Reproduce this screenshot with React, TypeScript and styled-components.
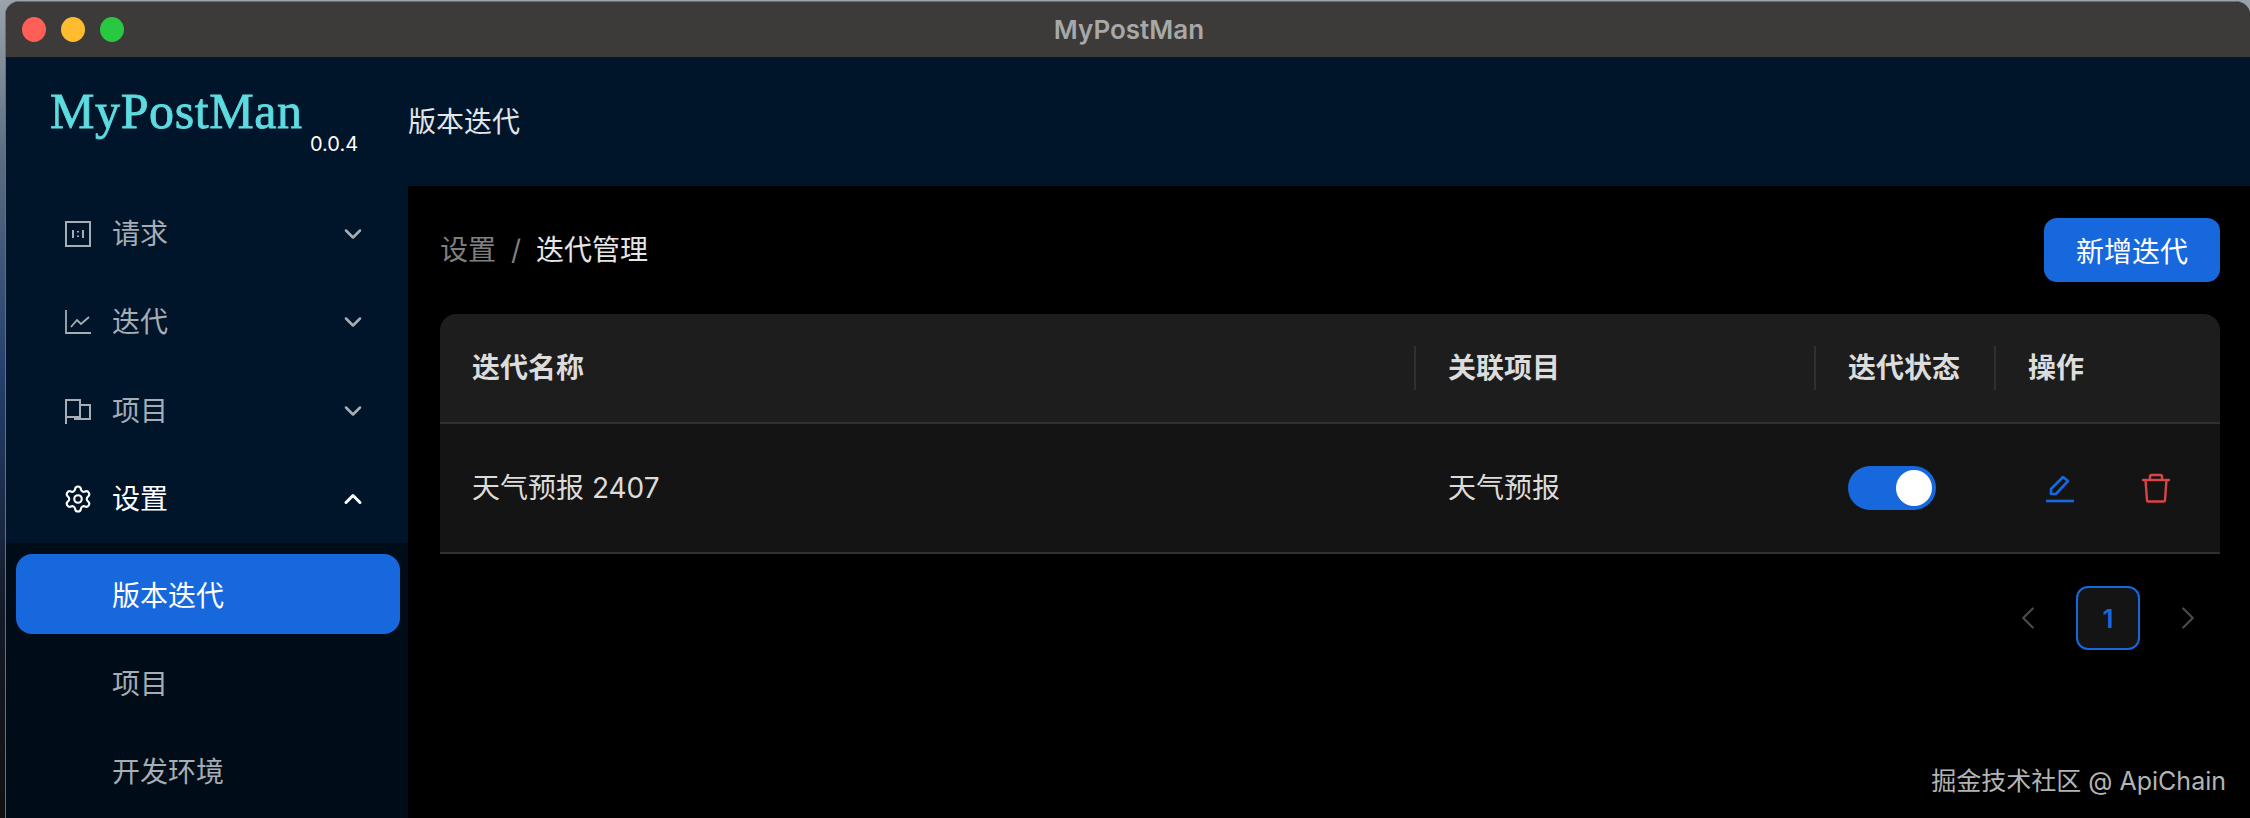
import React from 'react';
import styled, { createGlobalStyle } from 'styled-components';
import { ChevronDown, ChevronLeft, ChevronRight, ChevronUp, Settings } from 'lucide-react';

const CJK = `"Inter", "Noto Sans CJK SC", sans-serif`;

const GlobalStyle = createGlobalStyle`
  html, body {
    margin: 0;
    background: #000;
    overflow: hidden;
  }
  * { box-sizing: border-box; }
`;

const Desktop = styled.div`
  width: 2250px;
  height: 818px;
  padding: 1px 0 0 5px;
  background: linear-gradient(180deg, #9aa3ab 0%, #5a6b80 20%, #24406e 45%, #141a28 75%, #111 100%);
  font-family: ${CJK};
`;

const Window = styled.div`
  height: 817px;
  display: flex;
  flex-direction: column;
  border-style: solid;
  border-color: #6e6e6e;
  border-width: 1px 0 0 1px;
  border-radius: 14px 14px 0 0;
  overflow: hidden;
  background: #000;
`;

const TitleBar = styled.div`
  height: 56px;
  flex: none;
  display: flex;
  align-items: center;
  position: relative;
  padding-left: 16px;
  gap: 15px;
  background: #3c3b39;
  border-bottom: 1px solid #161616;
`;

const Light = styled.span<{ $color: string }>`
  width: 24px;
  height: 25px;
  border-radius: 50%;
  background: ${(p) => p.$color};
`;

const TitleText = styled.div`
  position: absolute;
  left: 2px;
  right: 0;
  top: 13px;
  text-align: center;
  font-size: 26px;
  line-height: 30px;
  font-weight: 600;
  color: #a8a8a8;
`;

const Body = styled.div`
  flex: 1;
  display: flex;
  min-height: 0;
`;

const Sidebar = styled.div`
  width: 402px;
  flex: none;
  display: flex;
  flex-direction: column;
  background: #00152a;
`;

const Logo = styled.div`
  height: 132px;
  flex: none;
  padding: 25px 0 0 44px;
  position: relative;
`;

const LogoText = styled.div`
  font-family: "Liberation Serif", serif;
  font-size: 50px;
  line-height: 56px;
  letter-spacing: 0.6px;
  -webkit-text-stroke: 0.8px #5cdbe0;
  color: #5cdbe0;
`;

const Version = styled.span`
  position: absolute;
  left: 304px;
  top: 75px;
  font-size: 20px;
  line-height: 22px;
  color: #fff;
`;

const MenuItem = styled.div<{ $open?: boolean }>`
  height: 88.25px;
  flex: none;
  display: flex;
  align-items: center;
  padding: 0 41px 0 58px;
  font-size: 28px;
  color: ${(p) => (p.$open ? '#fff' : '#a6adb4')};

  svg.menu-icon {
    width: 28px;
    height: 28px;
    flex: none;
  }

  svg.gear-icon {
    width: 30px;
    height: 30px;
    flex: none;
    margin: 0 -1px;
  }
`;

const MenuLabel = styled.span`
  margin-left: 20px;
  flex: 1;
  line-height: 34px;
`;

const SubMenu = styled.div`
  flex: 1;
  padding-top: 11px;
  background: #000c17;
`;

const SubItem = styled.div<{ $active?: boolean }>`
  height: 80px;
  margin: 0 8px 8px 10px;
  display: flex;
  align-items: center;
  padding-left: 96px;
  font-size: 28px;
  border-radius: 16px;
  color: ${(p) => (p.$active ? '#fff' : '#a6adb4')};
  background: ${(p) => (p.$active ? '#1668dc' : 'transparent')};
`;

const Main = styled.div`
  flex: 1;
  display: flex;
  flex-direction: column;
  min-width: 0;
`;

const Header = styled.div`
  height: 128px;
  flex: none;
  display: flex;
  align-items: center;
  padding-bottom: 4px;
  font-size: 28px;
  color: #e3e6e9;
  background: #00152a;
`;

const Content = styled.div`
  flex: 1;
  padding: 32px 30px 0 32px;
  background: #000;
  position: relative;
`;

const TopRow = styled.div`
  display: flex;
  align-items: center;
  justify-content: space-between;
  height: 64px;
`;

const Crumbs = styled.div`
  display: flex;
  gap: 15px;
  font-size: 28px;
  line-height: 34px;
  color: #e6e6e6;
`;

const CrumbMuted = styled.span`
  color: #7f7f7f;
`;

const PrimaryButton = styled.button`
  height: 64px;
  width: 176px;
  border: none;
  border-radius: 13px;
  background: #1668dc;
  color: #fff;
  font-family: inherit;
  font-size: 28px;
`;

const Table = styled.div`
  margin-top: 32px;
`;

const columns = '976px 400px 180px 1fr';

const HeadRow = styled.div`
  display: grid;
  grid-template-columns: ${columns};
  height: 110px;
  align-items: center;
  background: #1d1d1d;
  border-radius: 16px 16px 0 0;
  border-bottom: 2px solid #303030;
`;

const HeadCell = styled.div<{ $divider?: boolean }>`
  padding-left: 32px;
  font-size: 28px;
  line-height: 44px;
  font-weight: 600;
  color: #dcdcdc;
  border-right: 2px solid ${(p) => (p.$divider ? '#303030' : 'transparent')};
`;

const DataRow = styled.div`
  display: grid;
  grid-template-columns: ${columns};
  height: 130px;
  align-items: center;
  background: #141414;
  border-bottom: 2px solid #303030;
`;

const DataCell = styled.div`
  padding-left: 32px;
  font-size: 28px;
  line-height: 34px;
  color: #dcdcdc;
`;

const Toggle = styled.div`
  width: 88px;
  height: 44px;
  padding: 4px;
  display: flex;
  justify-content: flex-end;
  border-radius: 22px;
  background: #1668dc;
`;

const Knob = styled.span`
  width: 36px;
  height: 36px;
  border-radius: 50%;
  background: #fff;
`;

const Actions = styled.div`
  display: flex;
  align-items: center;
  gap: 66px;
  padding-left: 49px;
`;

const Pager = styled.div`
  display: flex;
  justify-content: flex-end;
  align-items: center;
  gap: 16px;
  margin-top: 32px;
  color: #4a4a4a;
`;

const PagerArrow = styled.div`
  width: 64px;
  height: 64px;
  display: flex;
  align-items: center;
  justify-content: center;
`;

const PagerCurrent = styled.div`
  width: 64px;
  height: 64px;
  display: flex;
  align-items: center;
  justify-content: center;
  border: 2px solid #1668dc;
  border-radius: 12px;
  background: #141414;
  color: #1668dc;
  font-size: 26px;
  font-weight: 600;
`;

const Watermark = styled.div`
  position: absolute;
  right: 24px;
  bottom: 21px;
  font-size: 25px;
  line-height: 32px;
  color: #b4b4b4;
`;

const RequestIcon = () => (
  <svg className="menu-icon" viewBox="0 0 28 28" fill="none" stroke="currentColor" strokeWidth="2">
    <rect x="2" y="2" width="24" height="24" />
    <path d="M9 10v8M19 10v8" />
    <path d="M14 11v1.6M14 15.4V17" />
  </svg>
);

const ChartIcon = () => (
  <svg className="menu-icon" viewBox="0 0 28 28" fill="none" stroke="currentColor" strokeWidth="1.8">
    <path d="M2 2v23h25" />
    <path d="M7 19l6-7 4 4 8-7" />
  </svg>
);

const FlagIcon = () => (
  <svg className="menu-icon" viewBox="0 0 28 28" fill="none" stroke="currentColor" strokeWidth="2">
    <path d="M2 27V3h14v17H2" />
    <path d="M16 8h10v14H10" />
  </svg>
);

const EditIcon = () => (
  <svg width="30" height="30" viewBox="0 0 30 30" fill="none" stroke="#1668dc" strokeWidth="2.6">
    <path d="M6 21v-5L18 4l5 4-12 13z" strokeLinejoin="round" />
    <path d="M1 28h28" />
  </svg>
);

const DeleteIcon = () => (
  <svg width="30" height="30" viewBox="0 0 30 30" fill="none" stroke="#dc4446" strokeWidth="2.4" strokeLinejoin="round">
    <path d="M1 7h28" />
    <path d="M9 7V3.5A1.5 1.5 0 0 1 10.5 2h9A1.5 1.5 0 0 1 21 3.5V7" />
    <path d="M4.5 7l1.5 20a1.5 1.5 0 0 0 1.5 1.5h15a1.5 1.5 0 0 0 1.5-1.5l1.5-20" />
  </svg>
);

const App: React.FC = () => {
  return (
    <Desktop>
      <GlobalStyle />
      <Window>
        <TitleBar>
          <Light $color="#ff5f57" />
          <Light $color="#febc2e" />
          <Light $color="#28c840" />
          <TitleText>MyPostMan</TitleText>
        </TitleBar>
        <Body>
          <Sidebar>
            <Logo>
              <LogoText>MyPostMan</LogoText>
              <Version>0.0.4</Version>
            </Logo>
            <MenuItem>
              <RequestIcon />
              <MenuLabel>请求</MenuLabel>
              <ChevronDown size={28} strokeWidth={2.2} />
            </MenuItem>
            <MenuItem>
              <ChartIcon />
              <MenuLabel>迭代</MenuLabel>
              <ChevronDown size={28} strokeWidth={2.2} />
            </MenuItem>
            <MenuItem>
              <FlagIcon />
              <MenuLabel>项目</MenuLabel>
              <ChevronDown size={28} strokeWidth={2.2} />
            </MenuItem>
            <MenuItem $open>
              <Settings className="gear-icon" strokeWidth={1.7} />
              <MenuLabel>设置</MenuLabel>
              <ChevronUp size={28} strokeWidth={2.6} />
            </MenuItem>
            <SubMenu>
              <SubItem $active>版本迭代</SubItem>
              <SubItem>项目</SubItem>
              <SubItem>开发环境</SubItem>
            </SubMenu>
          </Sidebar>
          <Main>
            <Header>版本迭代</Header>
            <Content>
              <TopRow>
                <Crumbs>
                  <CrumbMuted>设置</CrumbMuted>
                  <CrumbMuted>/</CrumbMuted>
                  <span>迭代管理</span>
                </Crumbs>
                <PrimaryButton>新增迭代</PrimaryButton>
              </TopRow>
              <Table>
                <HeadRow>
                  <HeadCell $divider>迭代名称</HeadCell>
                  <HeadCell $divider>关联项目</HeadCell>
                  <HeadCell $divider>迭代状态</HeadCell>
                  <HeadCell>操作</HeadCell>
                </HeadRow>
                <DataRow>
                  <DataCell>天气预报 2407</DataCell>
                  <DataCell>天气预报</DataCell>
                  <DataCell>
                    <Toggle>
                      <Knob />
                    </Toggle>
                  </DataCell>
                  <Actions>
                    <EditIcon />
                    <DeleteIcon />
                  </Actions>
                </DataRow>
              </Table>
              <Pager>
                <PagerArrow>
                  <ChevronLeft size={38} strokeWidth={1.4} />
                </PagerArrow>
                <PagerCurrent>1</PagerCurrent>
                <PagerArrow>
                  <ChevronRight size={38} strokeWidth={1.4} />
                </PagerArrow>
              </Pager>
              <Watermark>掘金技术社区 @ ApiChain</Watermark>
            </Content>
          </Main>
        </Body>
      </Window>
    </Desktop>
  );
};

export default App;
